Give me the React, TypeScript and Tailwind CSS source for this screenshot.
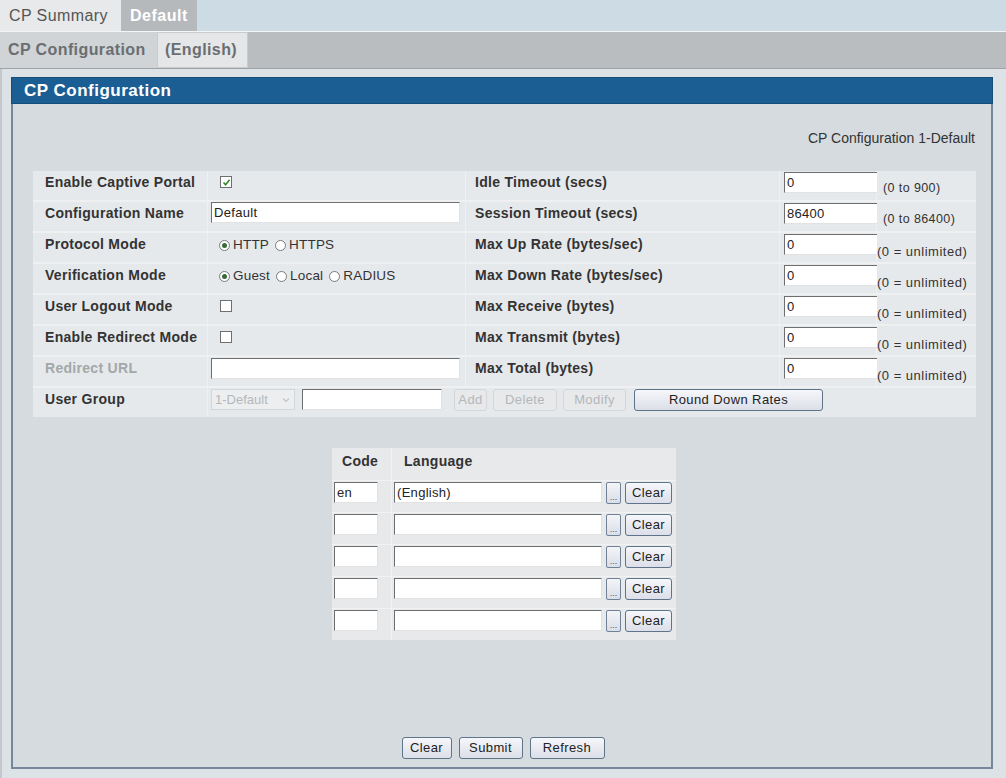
import React from "react";

const leftRows = [
  "Enable Captive Portal",
  "Configuration Name",
  "Protocol Mode",
  "Verification Mode",
  "User Logout Mode",
  "Enable Redirect Mode",
  "Redirect URL",
];

const rightRows = [
  { label: "Idle Timeout (secs)", value: "0", hint: "(0 to 900)", wide: true },
  { label: "Session Timeout (secs)", value: "86400", hint: "(0 to 86400)", wide: true },
  { label: "Max Up Rate (bytes/sec)", value: "0", hint: "(0 = unlimited)" },
  { label: "Max Down Rate (bytes/sec)", value: "0", hint: "(0 = unlimited)" },
  { label: "Max Receive (bytes)", value: "0", hint: "(0 = unlimited)" },
  { label: "Max Transmit (bytes)", value: "0", hint: "(0 = unlimited)" },
  { label: "Max Total (bytes)", value: "0", hint: "(0 = unlimited)" },
];

const langs = ["(English)", "", "", "", ""];

const Input = ({ value = "", className = "" }: { value?: string; className?: string }) => (
  <div
    className={`h-[21px] bg-white border border-t-[#6e6e6e] border-l-[#6e6e6e] border-r-[#e2e2e2] border-b-[#e2e2e2] text-[13px] tracking-[0.3px] text-[#222] leading-[19px] pl-[2px] ${className}`}
  >
    {value}
  </div>
);

const Button = ({ label, className = "", disabled = false }: { label: string; className?: string; disabled?: boolean }) => (
  <div
    className={`h-[22px] flex items-center justify-center text-[13px] tracking-[0.4px] rounded-[3px] ${
      disabled
        ? "border border-[#d4d6d8] bg-[#e7e9eb] text-[#b4b7ba]"
        : "border border-[#5f7389] bg-gradient-to-b from-[#f6f7fb] to-[#dcdfe8] text-[#222]"
    } ${className}`}
  >
    {label}
  </div>
);

const Check = ({ checked = false }: { checked?: boolean }) => (
  <div className="w-[12px] h-[12px] border border-[#6f6f6f] bg-white flex items-center justify-center">
    {checked && (
      <svg width="9" height="9" viewBox="0 0 9 9">
        <path d="M1.5 4.5 L3.6 6.8 L7.6 1.8" fill="none" stroke="#2f8a2f" strokeWidth="1.6" />
      </svg>
    )}
  </div>
);

const Radio = ({ label, on = false }: { label: string; on?: boolean }) => (
  <div className="flex items-center gap-[3px] text-[13.5px] tracking-[0.2px] text-[#333]">
    <div className="w-[11px] h-[11px] rounded-full border border-[#7a7a7a] bg-white flex items-center justify-center">
      {on && <div className="w-[5px] h-[5px] rounded-full bg-[#3a6a3a]" />}
    </div>
    {label}
  </div>
);

const Label = ({ text, muted = false, left = false }: { text: string; muted?: boolean; left?: boolean }) => (
  <div
    className={`text-[14px] tracking-[0.3px] font-bold pt-[1px] ${left ? "pl-[12px]" : "pl-[9px]"} ${
      muted ? "text-[#a4a7aa]" : "text-[#333]"
    }`}
  >
    {text}
  </div>
);

const leftValue = (i: number) => {
  switch (i) {
    case 0:
      return <div className="pl-[12px] pt-[5px]"><Check checked /></div>;
    case 1:
      return <div className="pl-[3px] pr-[5px]"><Input value="Default" /></div>;
    case 2:
      return (
        <div className="flex gap-[6px] pl-[11px] pt-[2px]">
          <Radio label="HTTP" on />
          <Radio label="HTTPS" />
        </div>
      );
    case 3:
      return (
        <div className="flex gap-[6px] pl-[11px] pt-[2px]">
          <Radio label="Guest" on />
          <Radio label="Local" />
          <Radio label="RADIUS" />
        </div>
      );
    case 4:
    case 5:
      return <div className="pl-[12px] pt-[5px]"><Check /></div>;
    default:
      return <div className="pl-[3px] pt-[1px] pr-[5px]"><Input /></div>;
  }
};

export default function App() {
  return (
    <div className="w-[1006px] h-[778px] overflow-hidden bg-[#dde2e6] font-['Liberation_Sans',Arial,sans-serif] flex flex-col">
      <div className="h-[32px] flex bg-[#cddbe4] border-b border-[#f2f5f7]">
        <div className="w-[121px] flex items-center pl-[9px] bg-[#e7e9eb] text-[16px] tracking-[0.4px] text-[#555]">CP Summary</div>
        <div className="w-[76px] flex items-center pl-[9px] bg-[#b5b9bc] text-[16px] tracking-[0.5px] font-bold text-white">Default</div>
      </div>
      <div className="h-[37px] flex bg-[#b9bdc0] border-b border-[#9ea3a7]">
        <div className="w-[157px] flex items-center pl-[8px] bg-[#d0d4d7] text-[16px] tracking-[0.4px] font-bold text-[#6b6e71]">CP Configuration</div>
        <div className="w-[91px] flex items-center pl-[7px] bg-[#e4e6e8] border border-[#c9ccce] text-[16px] tracking-[0.4px] font-bold text-[#6b6e71]">(English)</div>
      </div>
      <div className="flex-1 flex flex-col pl-[9px] pr-[13px] pt-[8px] pb-[9px] border-l-2 border-[#c4c8cc]">
        <div className="flex-1 flex flex-col">
          <div className="h-[27px] bg-[#1b5e93] flex items-center pl-[12px] text-[17px] tracking-[0.5px] font-bold text-white border border-[#174d79]">
            CP Configuration
          </div>
          <div className="flex-1 flex flex-col bg-[#d6dbdf] border-x-2 border-b-2 border-[#75879a] pl-[20px] pr-[15px]">
            <div className="text-right text-[14px] text-[#333] pt-[24px] pr-[1px]">CP Configuration 1-Default</div>
            <div className="mt-[22px] grid grid-cols-[174px_257px_313px_96px_1fr] gap-y-[2px] gap-x-[1px] bg-[#eef0f1]">
              {leftRows.map((l, i) => (
                <React.Fragment key={l}>
                  <div className="h-[29px] bg-[#e6e9eb]"><Label text={l} muted={i === 6} left /></div>
                  <div className="h-[29px] bg-[#e6e9eb]">{leftValue(i)}</div>
                  <div className="h-[29px] bg-[#e6e9eb]"><Label text={rightRows[i].label} /></div>
                  <div className="h-[29px] bg-[#e6e9eb] pl-[4px] pt-[1px]">
                    <Input value={rightRows[i].value} className={rightRows[i].wide ? "w-[97px]" : "w-[94px]"} />
                  </div>
                  <div
                    className={`h-[29px] bg-[#e6e9eb] text-[#333] ${
                      rightRows[i].wide ? "pl-[6px] pt-[8px] text-[12.5px] tracking-[0.4px]" : "pt-[9px] text-[13px] tracking-[0.5px]"
                    }`}
                  >
                    {rightRows[i].hint}
                  </div>
                </React.Fragment>
              ))}
              <div className="h-[29px] bg-[#e6e9eb]"><Label text="User Group" left /></div>
              <div className="h-[29px] bg-[#e6e9eb] col-span-4 flex items-start gap-[7px] pl-[3px] pt-[1px]">
                <div className="w-[84px] h-[21px] border border-[#d3d6d9] bg-[#eceef0] flex items-center justify-between pl-[3px] pr-[4px] text-[13px] text-[#b5b8bb]">
                  1-Default
                  <svg width="8" height="6" viewBox="0 0 8 6">
                    <path d="M1 1.5 L4 4.5 L7 1.5" fill="none" stroke="#c2c5c8" strokeWidth="1.2" />
                  </svg>
                </div>
                <Input className="w-[140px]" />
                <div className="flex gap-[6px] ml-[5px]">
                  <Button label="Add" disabled className="w-[33px]" />
                  <Button label="Delete" disabled className="w-[64px]" />
                  <Button label="Modify" disabled className="w-[63px]" />
                  <Button label="Round Down Rates" className="w-[189px] ml-[2px]" />
                </div>
              </div>
            </div>
            <div className="mt-[31px] ml-[299px] w-[344px] bg-[#f1f2f3] grid grid-cols-[59px_1fr] gap-x-[1px] gap-y-[1px]">
              <div className="h-[32px] bg-[#e7e9eb] text-[14px] tracking-[0.3px] font-bold text-[#333] pl-[10px] pt-[3px]">Code</div>
              <div className="h-[32px] bg-[#e7e9eb] text-[14px] tracking-[0.3px] font-bold text-[#333] pl-[12px] pt-[3px]">Language</div>
              {langs.map((lg, i) => (
                <React.Fragment key={i}>
                  <div className="h-[31px] bg-[#e7e9eb] pl-[2px] pt-[1px]">
                    <Input value={i === 0 ? "en" : ""} className="w-[44px]" />
                  </div>
                  <div className="h-[31px] bg-[#e7e9eb] flex items-start gap-[4px] pl-[2px] pt-[1px]">
                    <Input value={lg} className="w-[208px]" />
                    <div className="w-[15px] h-[22px] rounded-[2px] border border-[#6f8296] bg-gradient-to-b from-[#f4f5f8] to-[#d9dde6] text-[9px] text-[#556] flex items-end justify-center leading-[12px]">
                      ...
                    </div>
                    <Button label="Clear" className="w-[47px]" />
                  </div>
                </React.Fragment>
              ))}
            </div>
            <div className="flex-1" />
            <div className="flex justify-center gap-[7px] pb-[8px] pr-[3px]">
              <Button label="Clear" className="w-[50px]" />
              <Button label="Submit" className="w-[64px]" />
              <Button label="Refresh" className="w-[75px]" />
            </div>
          </div>
        </div>
      </div>
    </div>
  );
}
